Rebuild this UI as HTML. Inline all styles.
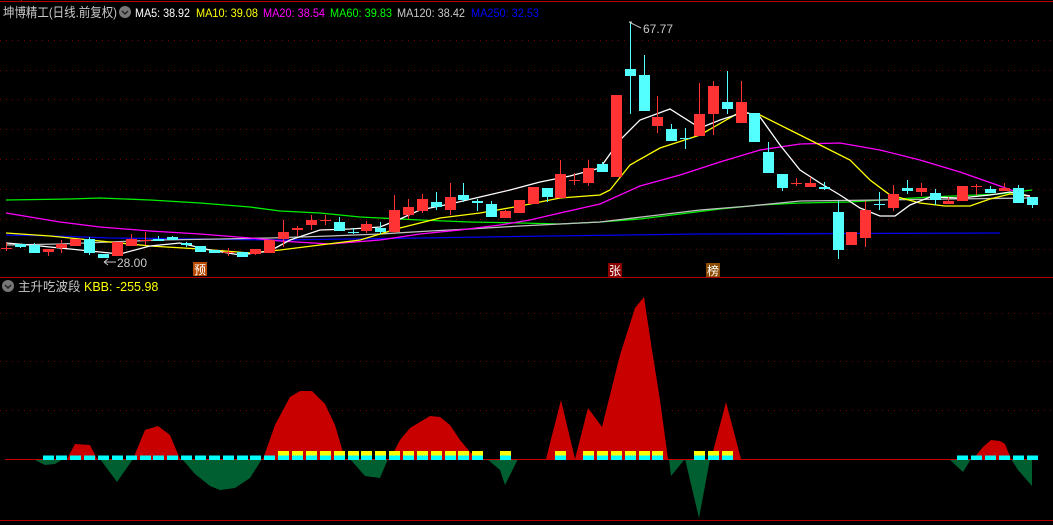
<!DOCTYPE html>
<html><head><meta charset="utf-8">
<style>
html,body{margin:0;padding:0;background:#000;width:1053px;height:525px;overflow:hidden}
svg{display:block}
text{font-family:"Liberation Sans","Noto Sans CJK SC",sans-serif}
</style></head>
<body>
<svg id="s" width="1053" height="525" viewBox="0 0 1053 525" xmlns="http://www.w3.org/2000/svg">
<rect width="1053" height="525" fill="#000"/>
<line x1="0" y1="1.5" x2="1053" y2="1.5" stroke="#b00000" stroke-width="1"/>
<line x1="21.5" y1="0" x2="21.5" y2="2" stroke="#b00000"/>
<g stroke="#7a0000" stroke-width="1" stroke-dasharray="1 5">
<line x1="0" y1="40.5" x2="1053" y2="40.5"/><line x1="0" y1="70.5" x2="1053" y2="70.5"/>
<line x1="0" y1="99.5" x2="1053" y2="99.5"/><line x1="0" y1="129.5" x2="1053" y2="129.5"/>
<line x1="0" y1="159.5" x2="1053" y2="159.5"/><line x1="0" y1="189.5" x2="1053" y2="189.5"/>
<line x1="0" y1="219.5" x2="1053" y2="219.5"/><line x1="0" y1="249.5" x2="1053" y2="249.5"/>
<line x1="0" y1="313.5" x2="1053" y2="313.5"/><line x1="0" y1="361.5" x2="1053" y2="361.5"/>
<line x1="0" y1="410.5" x2="1053" y2="410.5"/>
</g>
<line x1="0" y1="277.5" x2="1053" y2="277.5" stroke="#b00000"/>
<line x1="0" y1="520.5" x2="1053" y2="520.5" stroke="#b00000"/>

<!-- header -->
<text x="3" y="17" font-size="13" fill="#c8c8c8" textLength="114" lengthAdjust="spacingAndGlyphs">坤博精工(日线.前复权)</text>
<circle cx="125" cy="12" r="6" fill="#777"/><path d="M122 11 l3 3 l3 -3" stroke="#222" stroke-width="1.5" fill="none"/>
<text x="135" y="17" font-size="12" fill="#fff" textLength="55" lengthAdjust="spacingAndGlyphs">MA5: 38.92</text>
<text x="196" y="17" font-size="12" fill="#ffff00" textLength="62" lengthAdjust="spacingAndGlyphs">MA10: 39.08</text>
<text x="263" y="17" font-size="12" fill="#ff00ff" textLength="62" lengthAdjust="spacingAndGlyphs">MA20: 38.54</text>
<text x="330" y="17" font-size="12" fill="#00ff00" textLength="62" lengthAdjust="spacingAndGlyphs">MA60: 39.83</text>
<text x="397" y="17" font-size="12" fill="#c8c8c8" textLength="68" lengthAdjust="spacingAndGlyphs">MA120: 38.42</text>
<text x="471" y="17" font-size="12" fill="#0000ff" textLength="68" lengthAdjust="spacingAndGlyphs">MA250: 32.53</text>

<!-- MAs -->
<g fill="none" stroke-width="1.3">
<polyline stroke="#0000ee" points="6,235 55,236 110,238 280,240 350,239 420,238 550,236 700,234 1000,233"/>
<polyline stroke="#00ee00" points="6,200 70,199 100,198 150,200 200,203 250,207 280,211 320,213 360,217 420,220 470,222 520,223 560,224 600,222 640,219 680,214 720,209 760,205 800,203 850,202 930,197 1000,194 1032,190"/>
<polyline stroke="#c0c0c0" points="6,245 60,244 110,242 160,240 220,239 270,238 330,236 380,234 430,231 470,229 520,226 560,224 600,222 650,216 700,210 750,206 800,201 880,200 950,199 1032,198"/>
<polyline stroke="#ff00ff" points="6,213 60,222 100,227 150,231 200,234 250,238 280,241 330,244 380,240 420,234 460,230 500,225 530,220 560,213 600,204 640,186 680,175 720,162 760,150 800,144 840,143 880,150 920,160 960,172 1000,186 1030,197"/>
<polyline stroke="#ffff00" points="6,233 50,236 100,241 150,246 200,249 250,253 280,250 320,245 360,240 400,228 440,218 480,213 520,206 560,198 600,195 610,190 630,165 660,148 700,135 740,112 760,115 790,130 820,145 850,160 870,180 890,195 920,203 945,206 970,206 990,199 1010,194 1030,196"/>
<polyline stroke="#ffffff" points="6,243 30,245 60,248 90,251 120,254 150,246 180,243 210,250 240,255 270,251 290,240 320,230 350,229 380,227 400,219 420,210 450,204 480,197 510,190 540,182 570,176 600,168 620,140 640,120 670,109 700,128 720,120 745,112 760,117 780,145 800,170 820,183 840,195 860,208 880,216 895,216 910,205 930,197 960,198 990,195 1010,192 1030,196"/>
</g>
<g id="cd"></g>

<!-- labels -->
<path d="M104 262 l4 -3 M104 262 l4 3 M104 262 h12" stroke="#c8c8c8" fill="none"/>
<text x="117" y="267" font-size="12" fill="#c8c8c8">28.00</text>
<path d="M629 22 h3 M629 22 l12 6" stroke="#c8c8c8" fill="none"/>
<text x="643" y="33" font-size="12" fill="#c8c8c8">67.77</text>
<rect x="193" y="262" width="14" height="14" fill="#b84a00"/><text x="194" y="274" font-size="12" fill="#fff">预</text>
<rect x="608" y="263" width="14" height="14" fill="#8a0000"/><text x="609" y="275" font-size="12" fill="#fff">张</text>
<rect x="706" y="263" width="14" height="14" fill="#8a4a00"/><text x="707" y="275" font-size="12" fill="#fff">榜</text>

<!-- lower panel -->
<circle cx="8" cy="286" r="6" fill="#777"/><path d="M5 285 l3 3 l3 -3" stroke="#222" stroke-width="1.5" fill="none"/>
<text x="18" y="291" font-size="12.5" fill="#c8c8c8">主升吃波段</text>
<text x="84" y="291" font-size="12.5" fill="#ffff00">KBB: -255.98</text>

<g fill="#c80000">
<polygon points="67,459 75,444 90,445 97,459"/>
<polygon points="133,459 145,430 158,426 170,435 180,459"/>
<polygon points="263,459 275,425 290,397 300,391 312,391 325,404 335,425 345,459"/>
<polygon points="390,459 400,440 410,428 420,422 430,416 440,417 450,425 460,440 470,452 478,459"/>
<polygon points="546,459 561,400 575,459"/>
<polygon points="575,459 588,408 602,427 610,395 620,355 635,308 644,297 652,350 660,400 668,459"/>
<polygon points="711,459 726,402 741,459"/>
<polygon points="973,459 983,447 991,440 1000,441 1005,444 1011,459"/>
</g>
<g fill="#005f30">
<polygon points="33,459 45,465 55,464 63,459"/>
<polygon points="100,459 117,482 133,459"/>
<polygon points="182,459 195,474 210,486 220,490 235,488 250,478 262,459"/>
<polygon points="350,459 365,476 380,478 388,459"/>
<polygon points="487,459 500,470 505,485 518,459"/>
<polygon points="669,459 671,476 685,459"/>
<polygon points="685,459 699,518 710,459"/>
<polygon points="949,459 963,472 971,459"/>
<polygon points="1011,459 1018,470 1032,486 1032,459"/>
</g>
<line x1="5" y1="459.5" x2="1035" y2="459.5" stroke="#c80000"/>
<g id="sq"></g>
</svg>
<script>
var NS="http://www.w3.org/2000/svg";
function X(i){return 6+13.86*i;}
var C=[[248,249,243,251,'r'],[244,247,244,248,'c'],[245,253,243,253,'c'],[249,252,249,256,'r'],[244,248,240,253,'r'],[239,246,239,246,'r'],[239,253,237,255,'c'],[254,258,254,258,'c'],[242,256,242,256,'r'],[239,246,234,246,'r'],[240,241,232,245,'r'],[239,241,236,241,'c'],[237,240,236,240,'c'],[243,245,242,247,'c'],[246,252,246,252,'c'],[250,253,250,253,'c'],[252,253,248,256,'r'],[252,257,252,257,'c'],[249,254,249,255,'r'],[240,253,240,253,'r'],[232,239,220,247,'r'],[228,230,226,236,'r'],[220,225,215,230,'r'],[220,221,215,225,'r'],[222,231,217,231,'c'],[232,233,228,234,'c'],[224,231,221,233,'r'],[228,232,222,234,'c'],[210,232,195,233,'r'],[207,215,199,219,'r'],[199,211,194,213,'r'],[202,207,192,210,'c'],[197,210,183,215,'r'],[195,200,183,202,'c'],[201,203,199,211,'c'],[204,217,201,217,'c'],[211,218,210,218,'r'],[200,213,200,213,'r'],[187,204,187,204,'r'],[188,197,188,202,'c'],[174,198,160,198,'r'],[180,181,173,185,'r'],[168,183,160,186,'r'],[164,172,162,172,'c'],[95,177,95,177,'r'],[69,76,23,114,'c'],[75,111,55,111,'c'],[117,126,96,133,'r'],[129,141,124,141,'c'],[138,139,128,149,'c'],[114,136,83,136,'r'],[86,114,81,135,'r'],[102,109,71,114,'c'],[102,123,81,123,'r'],[113,142,113,142,'c'],[152,173,142,173,'c'],[174,188,174,191,'c'],[183,184,178,186,'r'],[183,187,177,187,'r'],[187,189,182,190,'c'],[212,250,201,259,'c'],[232,245,232,245,'r'],[210,238,201,247,'r'],[204,205,192,210,'c'],[194,208,185,211,'r'],[188,191,180,194,'c'],[188,192,183,196,'r'],[193,200,189,205,'c'],[201,204,197,204,'r'],[186,201,186,201,'r'],[186,187,184,195,'r'],[189,193,186,193,'c'],[188,191,183,191,'r'],[188,203,185,203,'c'],[197,205,197,208,'c']];
var g=document.getElementById('cd');
C.forEach(function(c,i){
 var x=Math.round(X(i)),col=c[4]=='r'?'#ff3333':'#54ffff';
 var l=document.createElementNS(NS,'rect');l.setAttribute('x',x);l.setAttribute('y',c[2]);l.setAttribute('width',1);l.setAttribute('height',Math.max(1,c[3]-c[2]));l.setAttribute('fill',col);g.appendChild(l);
 var b=document.createElementNS(NS,'rect');b.setAttribute('x',x-5);b.setAttribute('y',c[0]);b.setAttribute('width',11);b.setAttribute('height',Math.max(1,c[1]-c[0]));b.setAttribute('fill',col);g.appendChild(b);
});
var s=document.getElementById('sq');
function sq(i,yel){var x=Math.round(X(i))-5;
 var r=document.createElementNS(NS,'rect');r.setAttribute('x',x);r.setAttribute('y',455.5);r.setAttribute('width',11);r.setAttribute('height',4.5);r.setAttribute('fill','#00ffff');s.appendChild(r);
 if(yel){var y=document.createElementNS(NS,'rect');y.setAttribute('x',x);y.setAttribute('y',451);y.setAttribute('width',11);y.setAttribute('height',4.5);y.setAttribute('fill','#ffff00');s.appendChild(y);}}
for(var i=3;i<=19;i++)sq(i,false);
for(var i=20;i<=34;i++)sq(i,true);
sq(36,true);sq(40,true);
for(var i=42;i<=47;i++)sq(i,true);
for(var i=50;i<=52;i++)sq(i,true);
for(var i=69;i<=74;i++)sq(i,false);
</script>
</body></html>
